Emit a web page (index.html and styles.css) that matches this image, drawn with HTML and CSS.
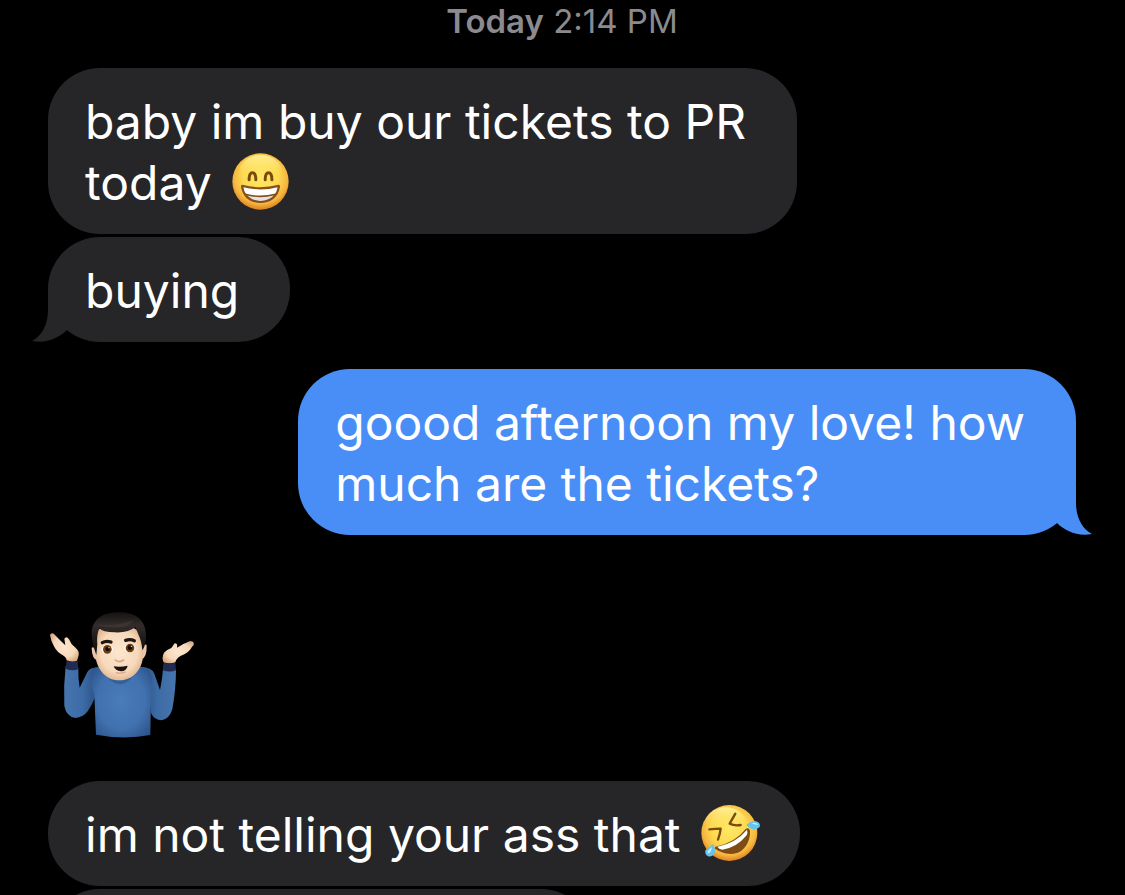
FILE: index.html
```html
<!DOCTYPE html>
<html lang="en">
<head>
<meta charset="utf-8">
<title>Messages</title>
<meta name="viewport" content="width=device-width, initial-scale=1">
<link rel="stylesheet" href="styles.css">
</head>
<body>
<main class="chat">
  <p class="stamp"><strong>Today</strong> <time datetime="14:14">2:14 PM</time></p>

  <div class="bubble received">baby im buy our tickets to PR<br>today <svg class="emoji" width="57" height="57" viewBox="32 24 170 170" role="img" aria-label="Beaming face">
      <defs>
        <radialGradient id="face" cx=".5" cy=".42" r=".58">
          <stop offset="0" stop-color="#ffe866"/>
          <stop offset=".55" stop-color="#fdd94f"/>
          <stop offset=".82" stop-color="#f6b740"/>
          <stop offset="1" stop-color="#dc8122"/>
        </radialGradient>
        <linearGradient id="shine" x1="0" y1="0" x2="0" y2="1">
          <stop offset="0" stop-color="#fff6ad" stop-opacity=".8"/>
          <stop offset=".6" stop-color="#ffe35c" stop-opacity="0"/>
        </linearGradient>
      </defs>
      <circle cx="117" cy="109" r="84" fill="url(#face)"/>
      <ellipse cx="117" cy="85" rx="65" ry="55" fill="url(#shine)"/>
      <path d="M83 104C83 90 87 83 93 83S103 90 103 104M131 104C131 90 135 83 141 83S151 90 151 104" fill="none" stroke="#7b4a0a" stroke-width="9" stroke-linecap="round"/>
      <path d="M63 119Q117 133 171 119Q176 119 175 126C169 159 145 173 117 173S65 159 59 126Q58 119 63 119Z" fill="#865016"/>
      <path d="M66 126Q117 139 168 126Q166 138 161 145Q117 157 73 145Q68 138 66 126Z" fill="#fff"/>
      <path d="M77 151Q117 161 157 151Q140 167 117 167T77 151Z" fill="#e3e2e5"/>
    </svg></div>

  <div class="bubble received tailed">buying<svg class="tail" width="50" height="50" viewBox="0 0 50 50" aria-hidden="true"><path d="M16 0V18C16 32 10 44 0 49C14 52 27 46 35 38L50 20V0Z"/></svg></div>

  <div class="bubble sent tailed">goood afternoon my love! how<br>much are the tickets?<svg class="tail" width="50" height="50" viewBox="0 0 50 50" aria-hidden="true"><path d="M34 0V18C34 32 40 44 50 49C36 52 23 46 15 38L0 20V0Z"/></svg></div>

  <svg class="sticker" width="165" height="150" viewBox="0 0 495 450" role="img" aria-label="Man shrugging">
    <defs>
      <linearGradient id="sleeve" x1="0" y1="0" x2="1" y2="0">
        <stop offset="0" stop-color="#4775ae"/>
        <stop offset=".55" stop-color="#3c6ba5"/>
        <stop offset="1" stop-color="#2b4f82"/>
      </linearGradient>
      <linearGradient id="sleeveRight" x1="1" y1="0" x2="0" y2="0">
        <stop offset="0" stop-color="#4775ae"/>
        <stop offset=".55" stop-color="#3c6ba5"/>
        <stop offset="1" stop-color="#2b4f82"/>
      </linearGradient>
      <radialGradient id="shirt" cx=".5" cy=".5" r=".65">
        <stop offset="0" stop-color="#4a7cba"/>
        <stop offset=".6" stop-color="#4171ae"/>
        <stop offset="1" stop-color="#2c5187"/>
      </radialGradient>
      <radialGradient id="skin" cx=".5" cy=".48" r=".58">
        <stop offset="0" stop-color="#fee6cd"/>
        <stop offset=".65" stop-color="#f7d9bb"/>
        <stop offset="1" stop-color="#dbae88"/>
      </radialGradient>
      <linearGradient id="hair" x1="0" y1="0" x2="0" y2="1">
        <stop offset="0" stop-color="#151212"/>
        <stop offset=".3" stop-color="#332c2b"/>
        <stop offset=".7" stop-color="#1b1717"/>
        <stop offset="1" stop-color="#0f0d0d"/>
      </linearGradient>
    </defs>
    <path d="M77 198Q95 206 115 203Q114 232 119 263L142 216Q154 199 174 205L168 286Q157 314 143 334Q130 352 106 354Q79 350 73 318Q70 258 77 198Z" fill="url(#sleeve)"/>
    <path d="M408 207Q389 213 369 208Q367 234 360 270L343 221Q334 201 305 201L325 290L334 342Q344 360 365 361Q388 357 397 328Q408 266 408 207Z" fill="url(#sleeveRight)"/>
    <path d="M163 203Q238 180 307 201C339 205 339 239 333 286L331 405Q252 420 168 404L163 284C151 250 145 220 163 203Z" fill="url(#shirt)"/>
    <path d="M185 207Q235 270 295 207Q264 255 238 253Q208 249 185 207Z" fill="#294f86" opacity=".55"/>
    <path d="M80 181Q96 188 113 182L115 208Q94 214 77 206ZM371 187Q389 194 406 187L408 211Q390 218 368 211Z" fill="#202b54"/>
    <path d="M80 181Q79 171 66 164Q52 157 43 141Q32 121 30 105Q34 97 42 102Q60 121 76 136L73 116Q79 106 87 118Q92 132 105 142Q119 153 116 166Q114 174 111 182Q95 187 80 181Z" fill="url(#skin)"/>
    <path d="M371 187Q364 174 372 158Q380 149 394 144L404 130Q414 130 411 143Q428 132 449 124Q459 122 461 128Q464 134 456 140Q449 154 433 163Q410 171 406 187Q389 193 371 187Z" fill="url(#skin)"/>
    <path d="M155 144Q160 137 169 152L172 181Q156 178 155 144ZM320 135Q313 130 307 145L305 177Q321 173 320 135Z" fill="#ebc5a9"/>
    <path d="M164 111Q168 75 235 76Q307 76 310 129V157C310 208 279 242 238 241C195 241 166 203 165 155Z" fill="url(#skin)"/>
    <path d="M169 165Q153 124 155 91C162 53 193 35 241 37C290 37 320 65 318 111Q317 138 307 151Q304 121 296 106L286 81Q266 99 224 97Q188 97 178 84Q169 107 172 133Z" fill="url(#hair)"/>
    <path d="M172 72Q219 83 281 60Q263 85 221 82Q190 83 172 72Z" fill="#554846" opacity=".35"/>
    <path d="M187 128Q198 121 213 126M257 121Q271 116 283 122" fill="none" stroke="#201713" stroke-width="10" stroke-linecap="round"/>
    <ellipse cx="202" cy="148" rx="17" ry="13" fill="#fff"/>
    <ellipse cx="269" cy="144" rx="17" ry="13" fill="#fff"/>
    <circle cx="202" cy="148" r="13" fill="#6b3d11"/>
    <circle cx="270" cy="144" r="13" fill="#6b3d11"/>
    <circle cx="203" cy="147" r="7" fill="#160d08"/>
    <circle cx="270" cy="143" r="7" fill="#160d08"/>
    <circle cx="207" cy="143" r="2" fill="#fff"/>
    <circle cx="274" cy="139" r="2" fill="#fff"/>
    <path d="M226 180Q237 190 251 180" fill="none" stroke="#d9a98b" stroke-width="5" stroke-linecap="round"/>
    <path d="M221 199Q241 202 263 197Q260 213 243 214Q226 213 221 199Z" fill="#21100e"/>
    <path d="M229 218Q243 222 256 216" fill="none" stroke="#d8a18d" stroke-width="4" stroke-linecap="round"/>
  </svg>

  <div class="bubble received emoji-end">im not telling your ass that <svg class="emoji" width="60" height="58" viewBox="24 28 180 174" role="img" aria-label="Rolling on the floor laughing">
      <circle cx="109" cy="115" r="84" fill="url(#face)"/>
      <ellipse cx="98" cy="90" rx="62" ry="52" fill="url(#shine)"/>
      <path d="M127 57L110 87Q124 94 143 91M49 104Q66 102 83 102Q81 119 75 135" fill="none" stroke="#7b4a0a" stroke-width="7" stroke-linecap="round" stroke-linejoin="round"/>
      <path d="M68 156Q127 144 158 103Q169 97 171 109C173 140 154 170 129 176C103 182 80 171 67 163Q63 158 68 156Z" fill="#7d4b13"/>
      <path d="M73 156Q129 145 162 105Q165 113 161 122Q130 160 88 165Q77 163 73 156Z" fill="#fff"/>
      <path d="M160 92Q172 78 190 80Q204 85 200 97Q192 106 177 104Q170 99 160 92Z" fill="#62c4ef"/>
      <path d="M175 86Q187 80 196 91Q186 91 175 86Z" fill="#c4efff"/>
      <path d="M61 148Q68 162 65 175Q57 188 45 185Q35 180 37 167Q47 159 61 148Z" fill="#62c4ef"/>
      <path d="M57 158Q44 165 43 176Q54 177 57 158Z" fill="#c4efff"/>
    </svg></div>

  <div class="bubble received next"></div>
</main>
</body>
</html>
```
FILE: styles.css
```css
body {
  margin: 0;
  background: #000;
}

.chat {
  box-sizing: border-box;
  height: 100vh;
  overflow: hidden;
  padding: 0 49px 0 48px;
  display: flex;
  flex-direction: column;
  align-items: flex-start;
  font-family: Inter, "Liberation Sans", sans-serif;
  color: #fff;
}

.chat > * {
  flex-shrink: 0;
}

.stamp {
  align-self: center;
  margin: 0 0 26px;
  font-size: 33px;
  line-height: 42px;
  color: #8a8a8f;
}

.stamp strong {
  font-weight: 600;
}

.bubble {
  --fill: #262628;
  position: relative;
  box-sizing: border-box;
  min-height: 105px;
  margin-bottom: 3px;
  padding: 23px 51px 21px 37px;
  border-radius: 52px;
  background: var(--fill);
  font-size: 48px;
  line-height: 61px;
}

.sent {
  --fill: #498ef7;
  align-self: flex-end;
}

.tailed {
  margin-bottom: 27px;
}

.tail {
  position: absolute;
  bottom: 0;
  left: -16px;
  fill: var(--fill);
}

.sent .tail {
  left: auto;
  right: -16px;
}

.emoji {
  margin-left: 7px;
  vertical-align: -10px;
}

.emoji-end {
  padding-right: 39px;
}

.sticker {
  margin: 38px 0 31px -8px;
}

.next {
  width: 53%;
}
```
